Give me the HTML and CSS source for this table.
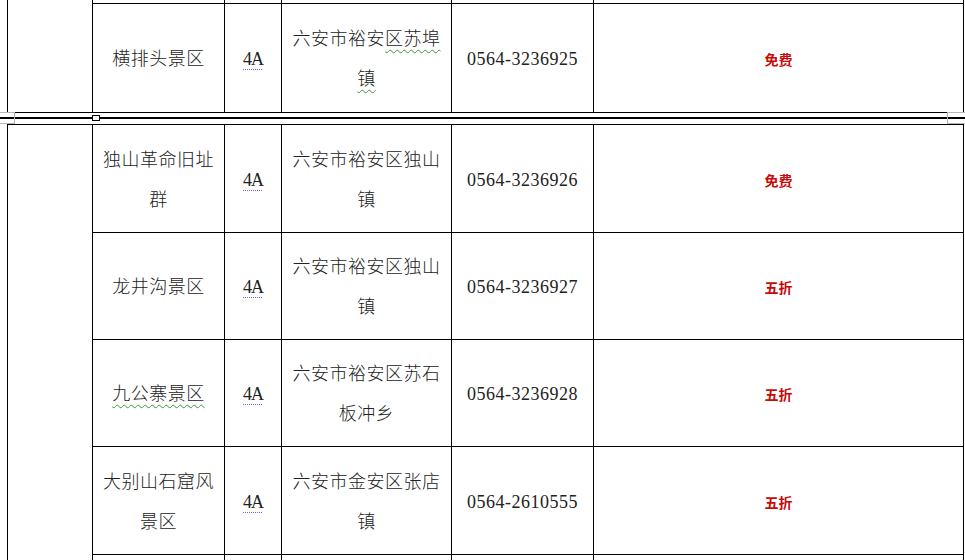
FILE: index.html
```html
<!DOCTYPE html>
<html lang="zh-CN">
<head>
<meta charset="utf-8">
<title>景区列表</title>
<link rel="stylesheet" href="styles.css">
</head>
<body>
<div class="page">
  <table class="grid upper">
    <colgroup>
      <col class="c1"><col class="c2"><col class="c3"><col class="c4"><col class="c5"><col class="c6">
    </colgroup>
    <tr class="cut-top">
      <td class="merged" rowspan="2"></td>
      <td></td><td></td><td></td><td></td><td></td>
    </tr>
    <tr class="row">
      <td>横排头景区</td>
      <td><span class="grade">4A</span></td>
      <td>六安市裕安<span class="squiggle">区苏埠</span><span class="squiggle">镇</span></td>
      <td class="num">0564-3236925</td>
      <td><span class="offer">免费</span></td>
    </tr>
  </table>

  <div class="page-break">
    <div class="break-line"></div>
    <span class="handle handle-left"></span>
    <span class="handle handle-right"></span>
    <span class="anchor"></span>
  </div>

  <table class="grid lower">
    <colgroup>
      <col class="c1"><col class="c2"><col class="c3"><col class="c4"><col class="c5"><col class="c6">
    </colgroup>
    <tr class="row">
      <td class="merged" rowspan="5"></td>
      <td>独山革命旧址群</td>
      <td><span class="grade">4A</span></td>
      <td>六安市裕安区独山镇</td>
      <td class="num">0564-3236926</td>
      <td><span class="offer">免费</span></td>
    </tr>
    <tr class="row">
      <td>龙井沟景区</td>
      <td><span class="grade">4A</span></td>
      <td>六安市裕安区独山镇</td>
      <td class="num">0564-3236927</td>
      <td><span class="offer">五折</span></td>
    </tr>
    <tr class="row">
      <td><span class="squiggle">九公寨景区</span></td>
      <td><span class="grade">4A</span></td>
      <td>六安市裕安区苏石板冲乡</td>
      <td class="num">0564-3236928</td>
      <td><span class="offer">五折</span></td>
    </tr>
    <tr class="row">
      <td>大别山石窟风景区</td>
      <td><span class="grade">4A</span></td>
      <td>六安市金安区张店镇</td>
      <td class="num">0564-2610555</td>
      <td><span class="offer">五折</span></td>
    </tr>
    <tr class="row">
      <td>&nbsp;</td>
      <td></td>
      <td></td>
      <td class="num"></td>
      <td></td>
    </tr>
  </table>
</div>
</body>
</html>
```

FILE: styles.css
```css
html, body {
  margin: 0;
  padding: 0;
  background: #ffffff;
}

.page {
  position: relative;
  width: 965px;
  height: 560px;
  overflow: hidden;
  background: #ffffff;
  font-family: "Liberation Serif", "Noto Sans CJK SC", serif;
  font-size: 18px;
  font-weight: 300;
  color: #222222;
}

.grid {
  margin-left: 7px;
  border-collapse: collapse;
  table-layout: fixed;
  width: 956px;
}

.c1 { width: 85px; }
.c2 { width: 132px; }
.c3 { width: 57px; }
.c4 { width: 170px; }
.c5 { width: 142px; }
.c6 { width: 370px; }

.grid td {
  border: 1px solid #000;
  padding: 0 6px;
  text-align: center;
  vertical-align: middle;
  line-height: 40px;
  letter-spacing: 0.5px;
}

.cut-top td {
  border-top: none;
  height: 3px;
  padding: 0;
  line-height: 0;
}

.upper .row td {
  height: 106px;
  padding-top: 2px;
  padding-bottom: 0;
}

.lower .row td {
  height: 104px;
  padding-top: 2px;
}

.lower .row:first-child td {
  height: 105px;
}

.lower .row:nth-child(4) td {
  height: 105px;
}

.lower .row:last-child td {
  height: 40px;
}

.num {
  letter-spacing: 0.6px;
}

.grade {
  text-decoration: underline dotted #7a5fd8;
  text-decoration-thickness: 1px;
  text-underline-offset: 4px;
  letter-spacing: -1px;
}

.squiggle {
  text-decoration: underline wavy #3c9a3c;
  text-decoration-thickness: 1px;
  text-underline-offset: 4px;
}

.offer {
  font-family: "Noto Sans CJK SC", sans-serif;
  font-size: 14px;
  font-weight: 700;
  color: #c80a0a;
  letter-spacing: 0;
}

.page-break {
  position: relative;
  padding: 4px 0 5px;
}

.break-line {
  height: 2px;
  background: #000;
}

.handle {
  position: absolute;
  top: -1px;
  height: 10px;
  width: 14px;
  border: 1px solid #b5b5b5;
}

.handle-left {
  left: -1px;
}

.handle-right {
  right: -1px;
  width: 17px;
}

.anchor {
  position: absolute;
  left: 92px;
  top: 2px;
  width: 6px;
  height: 4px;
  border: 1px solid #000;
  background: #fff;
}
```
